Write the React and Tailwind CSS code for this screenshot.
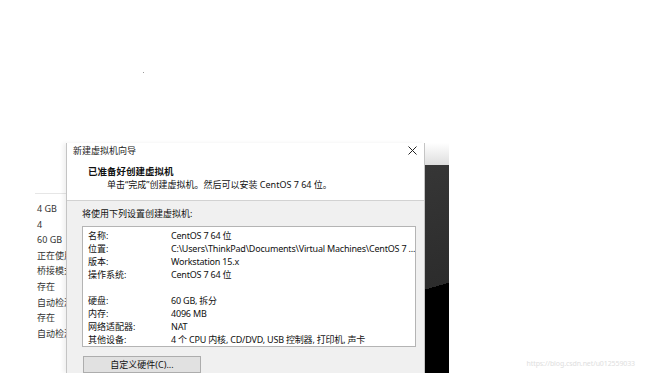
const FONT = { fontFamily: '"Noto Sans", "Noto Sans CJK SC", sans-serif' };

const sideItems = ['4 GB', '4', '60 GB', '正在使用', '桥接模式', '存在', '自动检测', '存在', '自动检测'];

const summary = [
  ['名称:', 'CentOS 7 64 位'],
  ['位置:', 'C:\\Users\\ThinkPad\\Documents\\Virtual Machines\\CentOS 7 ...'],
  ['版本:', 'Workstation 15.x'],
  ['操作系统:', 'CentOS 7 64 位'],
  ['', ''],
  ['硬盘:', '60 GB, 拆分'],
  ['内存:', '4096 MB'],
  ['网络适配器:', 'NAT'],
  ['其他设备:', '4 个 CPU 内核, CD/DVD, USB 控制器, 打印机, 声卡'],
];

function CloseIcon() {
  return (
    <svg width="9" height="9" viewBox="0 0 9 9" fill="none" stroke="#222" strokeWidth="1">
      <path d="M0.5 0.5L8.5 8.5M8.5 0.5L0.5 8.5" />
    </svg>
  );
}

function SidePanel() {
  return (
    <div className="w-[66px] shrink-0 overflow-hidden pt-[50px]">
      <div className="ml-[35px] border-t border-[#e6e6e6]" />
      <div className="pt-[7px] pl-[37px] text-[9px] leading-[15.6px] text-[#333] whitespace-nowrap">
        {sideItems.map((item, i) => (
          <div key={i}>{item}</div>
        ))}
      </div>
    </div>
  );
}

function WizardDialog() {
  return (
    <div className="w-[359px] shrink-0 flex flex-col bg-white border-l border-r border-[#c4c4c4] shadow-[-3px_0_4px_rgba(0,0,0,0.06)]">
      {/* title bar */}
      <div className="h-[15px] flex items-center justify-between pl-[6px] pr-[7px] text-[9px] text-[#222]">
        <span>新建虚拟机向导</span>
        <CloseIcon />
      </div>

      {/* header */}
      <div className="h-[44px] pt-[7px] border-b border-[#d2d2d2] text-[9px] leading-[13px] text-[#111]">
        <div className="pl-[21px] font-bold text-[9.5px]">已准备好创建虚拟机</div>
        <div className="pl-[40px]">单击“完成”创建虚拟机。然后可以安装 CentOS 7 64 位。</div>
      </div>

      {/* body */}
      <div className="flex-1 bg-[#f0f0f0] pt-[6px] pl-[15px] pr-[8px] text-[9px] leading-[13px] text-[#111]">
        <div>将使用下列设置创建虚拟机:</div>
        <div className="mt-[6px] bg-white border border-[#b4b4b4] pt-[2px] pl-[5px] whitespace-nowrap overflow-hidden">
          {summary.map(([label, value], i) => (
            <div key={i} className="flex h-[13px]">
              <div className="w-[83px] shrink-0">{label}</div>
              <div className="tracking-[-0.2px]">{value}</div>
            </div>
          ))}
        </div>
        <button className="mt-[9px] ml-[1px] w-[118px] h-[17px] flex items-center justify-center bg-[#e1e1e1] border border-[#adadad] text-[9px] text-[#111]">
          自定义硬件(C)...
        </button>
      </div>
    </div>
  );
}

function BackdropStrip() {
  return (
    <div className="w-[24px] shrink-0 flex flex-col">
      <div className="h-[22px] bg-gradient-to-b from-white to-[#dedede]" />
      <div className="flex-1 bg-[linear-gradient(164deg,#363636_0%,#2c2c2c_58%,#000_58%,#000_100%)]" />
    </div>
  );
}

export default function App() {
  return (
    <div className="w-[650px] h-[373px] overflow-hidden bg-white flex flex-col" style={FONT}>
      <div className="h-[143px] shrink-0 pt-[72px] pl-[143px]">
        <div className="w-px h-px bg-[#9a9a9a]" />
      </div>
      <div className="flex flex-1 min-h-0">
        <SidePanel />
        <WizardDialog />
        <BackdropStrip />
        <div className="flex-1 flex items-end justify-end pr-[15px] pb-[4px]">
          <span className="text-[7px] tracking-[-0.1px] text-[#dedede]">https://blog.csdn.net/u012559033</span>
        </div>
      </div>
    </div>
  );
}
